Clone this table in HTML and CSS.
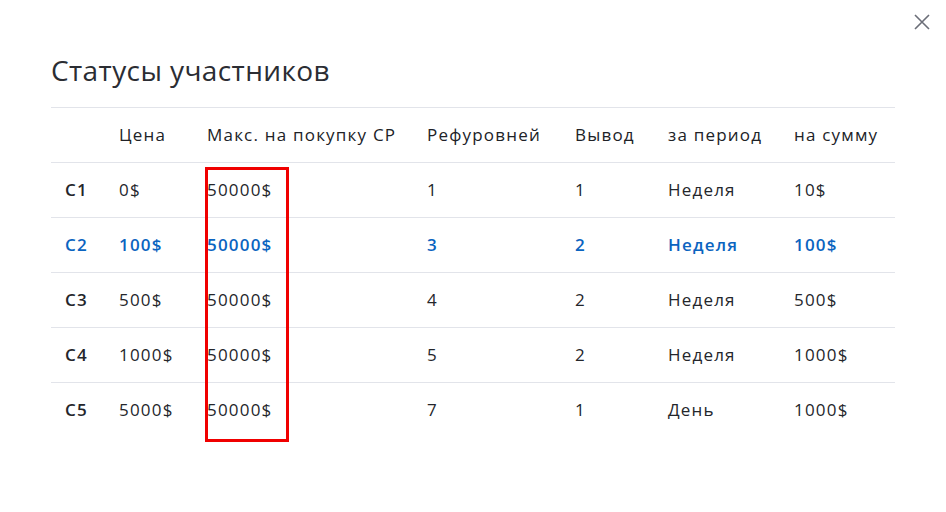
FILE: index.html
```html
<!DOCTYPE html>
<html lang="ru">
<head>
<meta charset="utf-8">
<title>Статусы участников</title>
<link rel="stylesheet" href="styles.css">
</head>
<body>
<div class="modal">
  <button class="close" aria-label="Закрыть">
    <svg width="16" height="16" viewBox="0 0 16 16"><path d="M1 1L15 15M15 1L1 15" stroke="#6b6e78" stroke-width="1.6" fill="none"/></svg>
  </button>
  <h1 class="title">Статусы участников</h1>
  <div class="table-wrap">
    <table class="statuses">
      <colgroup>
        <col class="c1"><col class="c2"><col class="c3"><col class="c4"><col class="c5"><col class="c6"><col class="c7">
      </colgroup>
      <thead>
        <tr><th></th><th>Цена</th><th>Макс. на покупку СР</th><th>Рефуровней</th><th>Вывод</th><th>за период</th><th>на сумму</th></tr>
      </thead>
      <tbody>
        <tr><td class="name">С1</td><td>0$</td><td>50000$</td><td>1</td><td>1</td><td>Неделя</td><td>10$</td></tr>
        <tr class="active"><td class="name">С2</td><td>100$</td><td>50000$</td><td>3</td><td>2</td><td>Неделя</td><td>100$</td></tr>
        <tr><td class="name">С3</td><td>500$</td><td>50000$</td><td>4</td><td>2</td><td>Неделя</td><td>500$</td></tr>
        <tr><td class="name">С4</td><td>1000$</td><td>50000$</td><td>5</td><td>2</td><td>Неделя</td><td>1000$</td></tr>
        <tr class="last"><td class="name">С5</td><td>5000$</td><td>50000$</td><td>7</td><td>1</td><td>День</td><td>1000$</td></tr>
      </tbody>
    </table>
    <div class="highlight"></div>
  </div>
</div>
</body>
</html>
```

FILE: styles.css
```css
html, body {
  margin: 0;
  padding: 0;
  background: #ffffff;
}
body {
  font-family: "Open Sans", "Noto Sans", sans-serif;
  color: #25272c;
}
.modal {
  position: relative;
  width: 946px;
  height: 512px;
  box-sizing: border-box;
  padding: 51px 51px 0 51px;
}
.close {
  position: absolute;
  top: 14px;
  right: 16px;
  width: 16px;
  height: 16px;
  padding: 0;
  border: 0;
  background: none;
  display: flex;
}
.title {
  margin: 0 0 18px 0;
  font-size: 28px;
  font-weight: 500;
  line-height: 38px;
  color: #2b2d33;
  letter-spacing: 0.4px;
}
.table-wrap {
  position: relative;
}
.statuses {
  width: 844px;
  border-collapse: collapse;
  table-layout: fixed;
  font-size: 17px;
  letter-spacing: 1.2px;
}
.c1 { width: 54px; }
.c2 { width: 88px; }
.c3 { width: 220px; }
.c4 { width: 148px; }
.c5 { width: 93px; }
.c6 { width: 126px; }
.c7 { width: 115px; }
.statuses th,
.statuses td {
  height: 52px;
  padding: 0 14px 2px 14px;
  text-align: left;
  vertical-align: middle;
  white-space: nowrap;
  border-bottom: 1px solid #e2e4ea;
}
.statuses thead th {
  border-top: 1px solid #e2e4ea;
  font-weight: 500;
  color: #202227;
}
.statuses td {
  font-weight: 500;
  color: #24262b;
}
.statuses td.name {
  font-weight: 600;
}
.statuses tr.active td {
  color: #0b64c0;
  font-weight: 600;
}
.statuses tr.last td {
  border-bottom: 0;
}
.highlight {
  position: absolute;
  left: 154px;
  top: 60px;
  width: 78px;
  height: 269px;
  border: 3px solid #f00000;
}
```
